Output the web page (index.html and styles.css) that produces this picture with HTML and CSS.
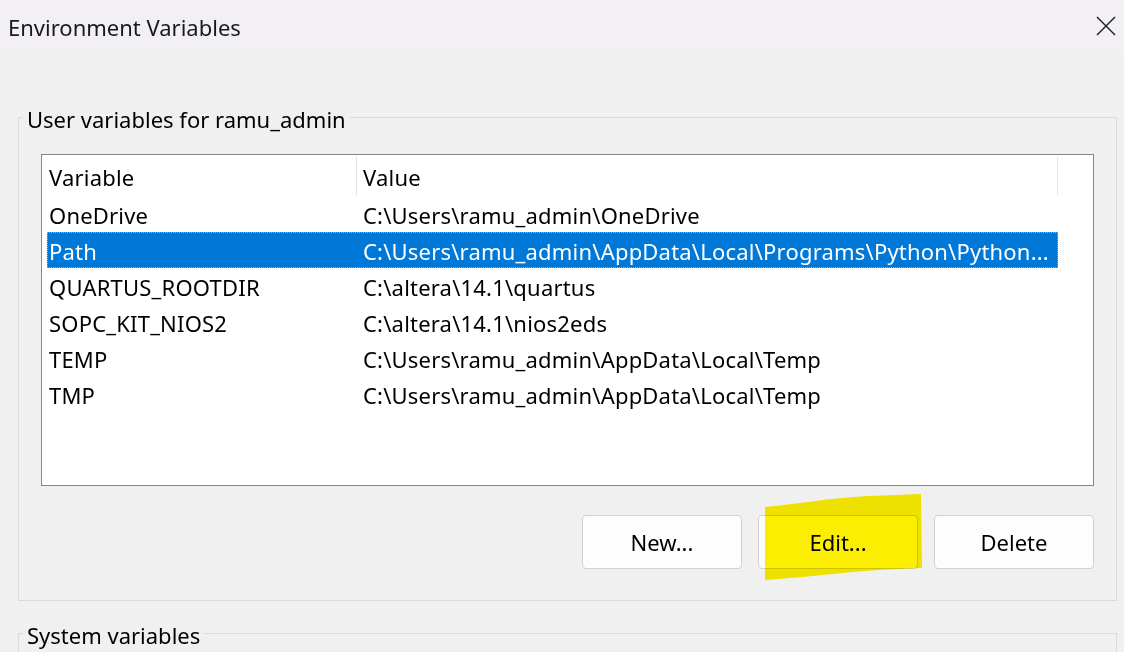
FILE: index.html
```html
<!DOCTYPE html>
<html lang="en">
<head>
<meta charset="utf-8">
<title>Environment Variables</title>
<link rel="stylesheet" href="styles.css">
</head>
<body>
<div class="window">
  <header class="titlebar">
    <span class="title">Environment Variables</span>
    <svg class="close" width="20" height="20" viewBox="0 0 20 20" aria-label="Close">
      <path d="M1 1 L19 19 M19 1 L1 19" stroke="#1b1b1b" stroke-width="1.4" fill="none"/>
    </svg>
  </header>

  <main class="main">
    <fieldset class="group">
      <legend class="group-title">User variables for ramu_admin</legend>
      <div class="listbox">
        <div class="list-head">
          <div class="col col-var">Variable</div>
          <div class="col col-val">Value</div>
        </div>
        <div class="row"><div class="cell cell-var">OneDrive</div><div class="cell cell-val">C:\Users\ramu_admin\OneDrive</div></div>
        <div class="row selected"><div class="cell cell-var">Path</div><div class="cell cell-val">C:\Users\ramu_admin\AppData\Local\Programs\Python\Python...</div></div>
        <div class="row"><div class="cell cell-var">QUARTUS_ROOTDIR</div><div class="cell cell-val">C:\altera\14.1\quartus</div></div>
        <div class="row"><div class="cell cell-var">SOPC_KIT_NIOS2</div><div class="cell cell-val">C:\altera\14.1\nios2eds</div></div>
        <div class="row"><div class="cell cell-var">TEMP</div><div class="cell cell-val">C:\Users\ramu_admin\AppData\Local\Temp</div></div>
        <div class="row"><div class="cell cell-var">TMP</div><div class="cell cell-val">C:\Users\ramu_admin\AppData\Local\Temp</div></div>
      </div>
      <div class="actions">
        <button class="btn">New...</button>
        <div class="btn-wrap">
          <button class="btn">Edit...</button>
          <svg class="highlight" width="170" height="92" viewBox="0 0 170 92" aria-hidden="true">
            <path d="M7 14 C40 11 70 5 110 3 L163 1 L164 75 C125 76 90 79 45 84 L7 87 Z" fill="#fdf000"/>
          </svg>
        </div>
        <button class="btn">Delete</button>
      </div>
    </fieldset>

    <fieldset class="group group-system">
      <legend class="group-title">System variables</legend>
    </fieldset>
  </main>
</div>
</body>
</html>
```

FILE: styles.css
```css
html, body {
  margin: 0;
  padding: 0;
  height: 652px;
  overflow: hidden;
}

body {
  background: #f0f0f0;
  font-family: "Noto Sans", "Open Sans", sans-serif;
  font-size: 22px;
  color: #000;
}

.titlebar {
  height: 53px;
  background: #f3f0f5;
  display: flex;
  align-items: center;
  justify-content: space-between;
  padding: 0 8px 0 8px;
  box-sizing: border-box;
}

.title {
  font-size: 22px;
  line-height: 28px;
  color: #1a1a1a;
  padding-top: 1px;
}

.close {
  display: block;
  margin-top: -1px;
}

.main {
  padding: 0 7px 0 18px;
}

.group {
  margin: 49px 0 0 0;
  padding: 0 22px 31px 22px;
  border: 1px solid #dadada;
  min-width: 0;
}

.group-title {
  margin-left: -18px;
  padding: 3px 4px 0 4px;
  line-height: 28px;
  font-size: 22px;
}

.listbox {
  margin-top: 21px;
  height: 332px;
  box-sizing: border-box;
  border: 1px solid #828790;
  background: #fff;
  letter-spacing: 0.2px;
}

.list-head {
  display: flex;
  height: 41px;
  margin-left: 5px;
}

.col {
  white-space: nowrap;
  box-sizing: border-box;
}

.col-var {
  width: 309px;
  padding: 4px 0 0 2px;
  line-height: 37px;
}

.col-val {
  width: 702px;
  padding: 2px 0 0 6px;
  border-left: 1px solid #e3e3e3;
  border-right: 1px solid #e3e3e3;
  margin-top: 2px;
  height: 38px;
  line-height: 37px;
}

.row {
  display: flex;
  height: 36px;
  width: 1011px;
  margin-left: 5px;
  white-space: nowrap;
  box-sizing: border-box;
}

.cell {
  padding-top: 2px;
  line-height: 34px;
  box-sizing: border-box;
}

.cell-var {
  width: 309px;
  padding-left: 2px;
}

.cell-val {
  padding-left: 7px;
  overflow: hidden;
}

.row.selected {
  background: #0078d7;
  color: #fff;
  outline: 1px dotted #e89a3c;
  outline-offset: -1px;
}

.actions {
  display: flex;
  justify-content: flex-end;
  gap: 16px;
  margin-top: 29px;
}

.btn {
  width: 160px;
  height: 54px;
  box-sizing: border-box;
  border: 1px solid #d0d0d0;
  border-radius: 4px;
  background: #fdfdfd;
  font-family: "Noto Sans", "Open Sans", sans-serif;
  font-size: 22px;
  color: #000;
  padding: 0;
}

.btn-wrap {
  position: relative;
  display: flex;
}

.highlight {
  position: absolute;
  left: 0;
  top: -22px;
  mix-blend-mode: multiply;
  pointer-events: none;
}

.group-system {
  margin-top: 17px;
  height: 200px;
}
```
